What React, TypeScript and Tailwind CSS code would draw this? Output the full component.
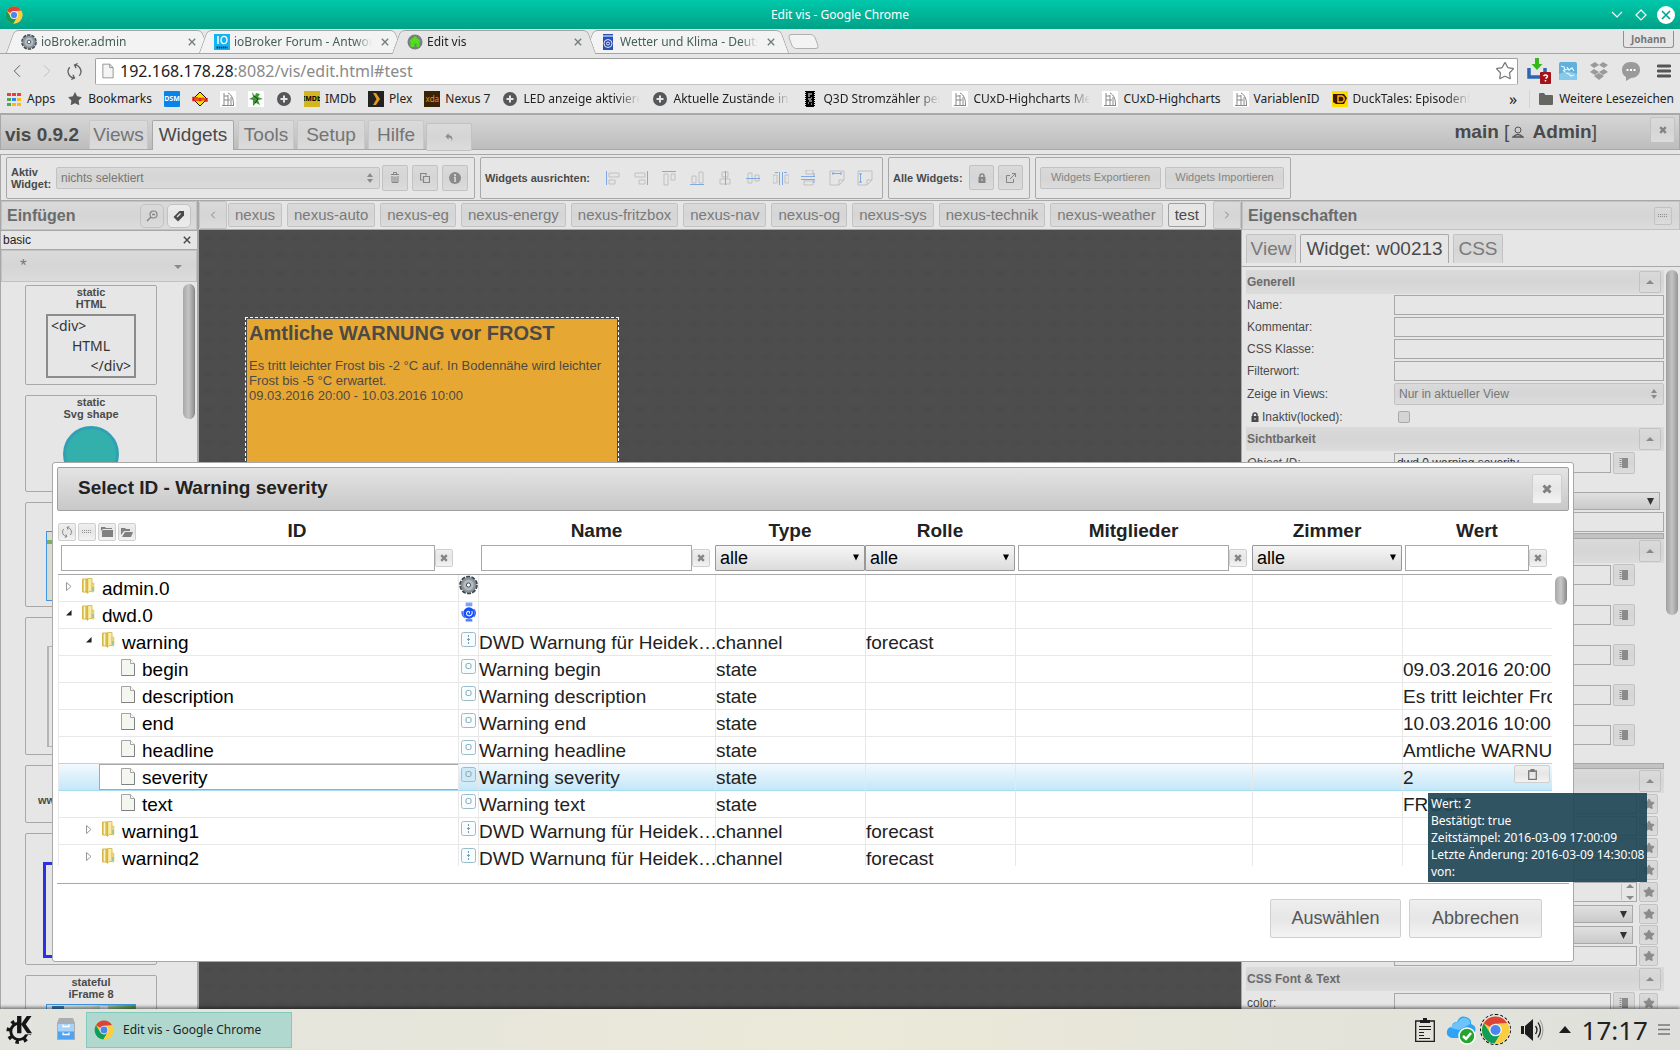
import React from "react";
import { ChevronLeft, ChevronRight, Star } from "lucide-react";

const GRAD = "bg-linear-to-b from-[#dadada] via-[#d5d5d5] to-[#dcdcdc]";
const FADE = "[mask-image:linear-gradient(to_right,black_80%,transparent)]";
const NOTO = "font-['Noto_Sans',sans-serif]";

/* ---------- icons ---------- */

function ChromeIcon({ className }: { className: string }) {
  return (
    <svg viewBox="0 0 32 32" className={className} aria-hidden="true">
      <circle cx="16" cy="16" r="15" fill="#fbc93d" />
      <path d="M16 16 3 8.500A15 15 0 0 1 29 8.500L16 9Z" fill="#db4437" />
      <path d="M3 8.500A15 15 0 0 0 15 31L22 19.500 16 16 10 19Z" fill="#0f9d58" />
      <path d="M29 8.500A15 15 0 0 1 15 31L22 19.500 20 9Z" fill="#fccd40" />
      <circle cx="16" cy="16" r="7" fill="#f1f1f1" />
      <circle cx="16" cy="16" r="5.500" fill="#4a86ee" />
    </svg>
  );
}

function GearIcon({ className }: { className: string }) {
  return (
    <svg viewBox="0 0 20 20" className={className} aria-hidden="true">
      <circle cx="10" cy="10" r="8.300" fill="none" stroke="#39444c" strokeWidth="3" strokeDasharray="4 1.220" />
      <circle cx="10" cy="10" r="7.800" fill="#8d979e" stroke="#7a858c" />
      <circle cx="10" cy="10" r="5.500" fill="#b4bcc2" />
      <circle cx="10" cy="10" r="2.200" fill="#fff" stroke="#39444c" />
    </svg>
  );
}

function DwdIcon({ className }: { className: string }) {
  return (
    <svg viewBox="0 0 20 20" className={className} aria-hidden="true">
      <path d="M7 0h7v4H7z" fill="#7ea2ff" />
      <path d="M3.500 9a7 6.500 0 0 0 3 7M15.500 7a7 6.500 0 0 1 0 8" fill="none" stroke="#3a6cf5" strokeWidth="1.500" />
      <circle cx="10.500" cy="11" r="6" fill="#1450f5" />
      <path d="M10.500 11.500c1.500-1 0-3-1.500-2s-1.500 4 1 4.500 5-2 3.500-5" fill="none" stroke="#fff" strokeWidth="1.100" />
      <path d="M7 17.500h7V20H7z" fill="#4b7cff" />
    </svg>
  );
}

function TabFavicon({ kind }: { kind: string }) {
  if (kind === "gear") return <GearIcon className="size-4" />;
  if (kind === "io")
    return (
      <svg viewBox="0 0 16 16" className="size-4" aria-hidden="true">
        <path d="M0 0h16v16H0z" fill="#12b4f4" />
        <path d="M4 2v8" stroke="#fff" strokeWidth="1.500" />
        <ellipse cx="10" cy="6" rx="3" ry="3.700" fill="none" stroke="#fff" strokeWidth="1.300" />
        <path d="M2.500 13.500h11" stroke="#0b3a78" strokeWidth="2" strokeDasharray="1.500 .6" />
      </svg>
    );
  if (kind === "home")
    return (
      <svg viewBox="0 0 16 16" className="size-4" aria-hidden="true">
        <circle cx="8" cy="8" r="7.500" fill="#7c7c80" />
        <path d="M8 2 14 7.500h-1.500V13h-3V9.500h-2V13h-4V7.500H2Z" fill="#4fe01c" />
      </svg>
    );
  return (
    <svg viewBox="0 0 16 16" className="size-4" aria-hidden="true">
      <path d="M3 0h10v16H3z" fill="#2a50b5" />
      <path d="M3 1h10v2H3z" fill="#8ba6e6" />
      <circle cx="8" cy="9.500" r="4" fill="none" stroke="#dfe7ff" />
      <circle cx="8" cy="9.500" r="1.500" fill="none" stroke="#dfe7ff" />
    </svg>
  );
}

function CloseX({ className }: { className: string }) {
  return (
    <svg viewBox="0 0 10 10" className={className} aria-hidden="true">
      <path d="m1 1 8 8M9 1 1 9" stroke="currentColor" strokeWidth="1.700" fill="none" />
    </svg>
  );
}

function UiClose({ className = "size-2" }: { className?: string }) {
  return (
    <svg viewBox="0 0 10 10" className={className} aria-hidden="true">
      <path d="m1.500 1.500 7 7M8.500 1.500l-7 7" stroke="currentColor" strokeWidth="3" fill="none" />
    </svg>
  );
}

/* Two arcs chasing each other, each ending in an arrow head. */
function ReloadIcon({ className }: { className: string }) {
  return (
    <svg viewBox="0 0 16 16" className={className} fill="none" stroke="currentColor" strokeWidth="1.200" aria-hidden="true">
      <path d="M8 2A6 6 0 0 1 12.500 12M8 14A6 6 0 0 1 3.500 4" />
      <path d="M11 .5 8 2l1.500 3M5 15.500 8 14l-1.500-3" />
    </svg>
  );
}

function UpDown() {
  return (
    <svg viewBox="0 0 8 10" className="h-2.5 w-2 fill-[#8a8a8a]" aria-hidden="true">
      <path d="M4 0 7 4H1ZM4 10 1 6h6Z" />
    </svg>
  );
}

function Triangle({ up, className = "" }: { up?: boolean; className?: string }) {
  return (
    <svg viewBox="0 0 8 4" className={`h-1 w-2 fill-[#8a8a8a] ${className}`} aria-hidden="true">
      <path d={up ? "M4 0 8 4H0Z" : "M0 0h8L4 4Z"} />
    </svg>
  );
}

function DotsIcon() {
  return (
    <svg viewBox="0 0 12 4" className="h-1 w-3 fill-[#8e8e8e]" aria-hidden="true">
      <path d="M1 0h1v1H1zM3 0h1v1H3zM5 0h1v1H5zM7 0h1v1H7zM9 0h1v1H9zM1 2h1v1H1zM3 2h1v1H3zM5 2h1v1H5zM7 2h1v1H7zM9 2h1v1H9z" />
    </svg>
  );
}

function NoteIcon() {
  return (
    <svg viewBox="0 0 10 10" className="size-2.5" aria-hidden="true">
      <path d="M3 0h6v10H3z" fill="#8b8b8b" />
      <path d="M1.500 0v10" stroke="#8b8b8b" strokeWidth="2" strokeDasharray="1 1" />
    </svg>
  );
}

function LockIcon({ className }: { className: string }) {
  return (
    <svg viewBox="0 0 8 10" className={className} aria-hidden="true">
      <path d="M2 4V3a2 2 0 0 1 4 0v1" fill="none" stroke="currentColor" strokeWidth="1.500" />
      <path d="M.5 4h7v6h-7z" fill="currentColor" />
      <path d="M3.500 6h1v2h-1z" fill="#ddd" />
    </svg>
  );
}

function BookmarkIcon({ kind }: { kind: string }) {
  const c = "size-4 shrink-0";
  switch (kind) {
    case "apps":
      return (
        <svg viewBox="0 0 16 16" className={c} aria-hidden="true">
          <path d="M1 2h4v3H1zM6 2h4v3H6zM11 2h4v3h-4z" fill="#e8403a" />
          <path d="M1 7h4v3H1zM1 12h4v3H1z" fill="#4aa84f" />
          <path d="M6 7h4v3H6z" fill="#2f86f0" />
          <path d="M11 7h4v3h-4zM6 12h4v3H6zM11 12h4v3h-4z" fill="#fbb913" />
        </svg>
      );
    case "star":
      return <Star className="size-4 shrink-0 fill-[#5a5a5a] stroke-none" aria-hidden="true" />;
    case "dsm":
      return (
        <span className="flex h-4 w-4 shrink-0 items-center justify-center rounded-[1px] bg-[#0684e8] text-[7px] leading-none font-bold text-white">
          DSM
        </span>
      );
    case "diamond":
      return (
        <svg viewBox="0 0 16 16" className={c} aria-hidden="true">
          <path d="m8 1 7 7-7 7-7-7Z" fill="#fde000" stroke="#111" />
          <path d="M1 6.500h2v3H1zM5 6v4M7 7.500h2v2H7zM11 6.500v3M13 7v3h2V7" fill="none" stroke="#e01818" strokeWidth="1.400" />
        </svg>
      );
    case "chart":
      return (
        <svg viewBox="0 0 16 16" className={c} aria-hidden="true">
          <path d="M0 0h16v16H0z" fill="#fff" />
          <path d="M4 2v13M2 14.500h12M4 5h4M8 4v11M4 9h6M8 2c4 2 5.500 6 5.500 12M11 6v8" stroke="#888" fill="none" />
        </svg>
      );
    case "frog":
      return (
        <svg viewBox="0 0 16 16" className={c} aria-hidden="true">
          <path d="M0 0h16v16H0z" fill="#fff" />
          <path d="m4 1 3 4 1-3 4 1-2 3 5 2-5 1 2 5-4-2-3 3V9L1 8l4-2Z" fill="#3f9a35" />
          <path d="m6 5 4 3-3 4" stroke="#17400f" fill="none" />
        </svg>
      );
    case "plus":
      return (
        <svg viewBox="0 0 16 16" className={c} aria-hidden="true">
          <circle cx="8" cy="8" r="7" fill="#55575a" />
          <path d="M8 4.500v7M4.500 8h7" stroke="#e6e6e6" strokeWidth="2" />
        </svg>
      );
    case "imdb":
      return (
        <span className="flex h-4 w-4 shrink-0 items-center justify-center overflow-hidden bg-[#d3b61f] text-[7px] leading-none font-bold text-black">
          IMDb
        </span>
      );
    case "plex":
      return (
        <svg viewBox="0 0 16 16" className={c} aria-hidden="true">
          <path d="M0 0h16v16H0z" fill="#222" />
          <path d="M5 2h3l4 6-4 6H5l3.500-6Z" fill="#e59a1c" />
        </svg>
      );
    case "xda":
      return (
        <span className="flex h-4 w-4 shrink-0 items-center justify-center bg-[#3a2205] text-[8px] leading-none text-[#f38a1d]">
          xda
        </span>
      );
    case "cpu":
      return (
        <svg viewBox="0 0 16 16" className={c} aria-hidden="true">
          <path d="M4 0h8v16H4z" fill="#000" />
          <path d="M3.500 0v16M12.500 0v16" stroke="#000" strokeDasharray="1 1" />
          <path d="M6 3h4M6 5h2M9 7h1M6 8h3M7 10h3M6 12h1M9 13h1" stroke="#fff" />
        </svg>
      );
    case "duck":
      return (
        <svg viewBox="0 0 16 16" className={c} aria-hidden="true">
          <rect width="16" height="16" rx="1" fill="#ffdc00" />
          <path d="M1 3h11l3 4-3 6H4L1 11Z" fill="#3d1500" />
          <path d="M6 5h4c3 1 3 5 0 6H6Z" fill="none" stroke="#ffb400" strokeWidth="1.500" />
        </svg>
      );
    default:
      return (
        <svg viewBox="0 0 16 16" className={c} aria-hidden="true">
          <path d="M1 3q0-1 1-1h4l1.500 2H14q1 0 1 1v8q0 1-1 1H2q-1 0-1-1Z" fill="#666660" />
        </svg>
      );
  }
}

/* The ten alignment commands: grey boxes with a blue guide. */
function AlignIcon({ index }: { index: number }) {
  const grey = [
    "M4 3h10v4H4zM4 10h6v4H4z",
    "M2 3h10v4H2zM6 10h6v4H6z",
    "M3 4h4v11H3zM10 4h4v6h-4z",
    "M3 6h4v7H3zM10 2h4v11h-4z",
    "M5 2h6v5H5zM3 9h10v5H3z",
    "M3 3h4v10H3zM10 5h4v6h-4z",
    "M0 5h4v8H0zM12 5h4v8h-4z",
    "M5 0h7v4H5zM3 11h9v4H3z",
    "M1 1h14v9l-5 5H1zM10 15v-5h5",
    "M1 1h14v9l-5 5H1zM10 15v-5h5",
  ];
  const blue = [
    "M1.500 1v14",
    "M14.500 1v14",
    "M1 1.500h14",
    "M1 14.500h14",
    "M8.500 1v14",
    "M1 8.500h14",
    "M6.500 2v13M9.500 2v13M2 2.500h3M11 2.500h3",
    "M0 6.500h14M0 9.500h14M13 3v3M13 10v3",
    "M3 3.500h9M4 2v3M12 2v3",
    "M3.500 3v10M2 4h3M2 12h3",
  ];
  return (
    <svg viewBox="0 0 16 16" className="size-4 fill-none" aria-hidden="true">
      <path d={grey[index]} stroke="#c0c0c0" />
      <path d={blue[index]} stroke="#7fa9e4" />
    </svg>
  );
}

function FolderIcon() {
  return (
    <svg viewBox="0 0 14 16" className="h-4 w-3.5" aria-hidden="true">
      <path d="M1.500 1h5v13h-5z" fill="#e8cf68" stroke="#d6b64a" />
      <path d="M6.500.5H11v13H8l-1.500 2Z" fill="#f3e391" stroke="#dcc25c" />
      <path d="M3.500 1.500v12M9 1v12" stroke="#fbf4c4" />
      <path d="M6 1v14" stroke="#cda93a" />
      <path d="M11 5h2v9h-2z" fill="#efd978" stroke="#d9bf5c" strokeWidth=".5" />
      <path d="M12 9v4" stroke="#56b4dd" />
    </svg>
  );
}

function PageIcon() {
  return (
    <svg viewBox="0 0 14 17" className="h-[17px] w-3.5" aria-hidden="true">
      <path d="M.5.5h9l4 4v12H.5Z" fill="#f4f6f0" stroke="#a4a4a4" />
      <path d="M9.500.5v4h4" fill="#fff" stroke="#a4a4a4" />
      <path d="M.5 16.500h13V5" fill="none" stroke="#808080" />
    </svg>
  );
}

function ObjIcon({ kind }: { kind: string }) {
  if (kind === "gear") return <GearIcon className="size-5" />;
  if (kind === "dwd") return <DwdIcon className="size-5" />;
  return (
    <svg viewBox="0 0 15 15" className="mt-[3px] size-[15px]" aria-hidden="true">
      <rect x=".5" y=".5" width="14" height="14" rx="2" fill={kind === "hit" ? "#cfe8f4" : "#f8fcfd"} stroke="#9bbccb" />
      {kind === "channel" ? (
        <path d="M7.500 3v2M7.500 6v3M7.500 10v2M6 7.500h3" stroke="#6d9db3" />
      ) : (
        <rect x="5" y="4.500" width="5" height="5" rx="1.500" fill="none" stroke="#7fa9bc" />
      )}
    </svg>
  );
}

/* ---------- shared controls ---------- */

function UiButton({ label, className, children }: { label?: string; className: string; children: React.ReactNode }) {
  return (
    <button
      type="button"
      aria-label={label}
      className={`flex shrink-0 items-center justify-center rounded-[2px] border border-[#c2c2c2] text-[#858585] ${GRAD} ${className}`}
    >
      {children}
    </button>
  );
}

function LightButton({ label, className, children }: { label?: string; className: string; children: React.ReactNode }) {
  return (
    <button
      type="button"
      aria-label={label}
      className={`flex shrink-0 items-center justify-center rounded-[2px] border border-[#cfcfcf] bg-linear-to-b from-[#efefef] via-[#e6e6e6] to-[#f3f3f3] ${className}`}
    >
      {children}
    </button>
  );
}

function StarButton() {
  return (
    <UiButton label="Mehrfach" className="h-5 w-[19px]">
      <Star className="size-3 fill-[#8b8b8b] stroke-[#8b8b8b]" />
    </UiButton>
  );
}

/* ---------- browser chrome ---------- */

function TitleBar() {
  return (
    <header className={`grid h-[29px] shrink-0 grid-cols-[1fr_auto_1fr] items-center bg-linear-to-b from-[#00c8aa] to-[#00a287] px-[5px] text-white ${NOTO}`}>
      <ChromeIcon className="size-[18px]" />
      <h1 className="text-[12px]">Edit vis - Google Chrome</h1>
      <div className="flex items-center justify-end gap-3">
        <button type="button" aria-label="Minimieren">
          <svg viewBox="0 0 12 12" className="size-3"><path d="m1 3 5 5 5-5" fill="none" stroke="#fff" strokeWidth="1.200" /></svg>
        </button>
        <button type="button" aria-label="Maximieren" className="-mr-[2px]">
          <svg viewBox="0 0 12 12" className="size-3"><path d="m6 1 5 5-5 5-5-5Z" fill="none" stroke="#fff" strokeWidth="1.200" /></svg>
        </button>
        <button type="button" aria-label="Schließen" className="flex size-[18px] items-center justify-center rounded-full bg-white text-[#00a890]">
          <CloseX className="size-2.5" />
        </button>
      </div>
    </header>
  );
}

const TABS = [
  { title: "ioBroker.admin", icon: "gear" },
  { title: "ioBroker Forum - Antworten", icon: "io" },
  { title: "Edit vis", icon: "home", active: true },
  { title: "Wetter und Klima - Deutscher", icon: "dwd" },
];

function BrowserTabs() {
  return (
    <div className={`flex h-[25px] shrink-0 border-b border-[#a5a5a5] bg-[#e6e6e6] pr-[6px] pl-[10px] text-[12px] ${NOTO}`}>
      {TABS.map((t) => {
        const bg = t.active ? "before:bg-[#e6e6e6] after:bg-[#e6e6e6] before:h-6 after:h-6" : "before:bg-[#f3f3f3] after:bg-[#f3f3f3] before:h-[23px] after:h-[23px]";
        return (
          <div
            key={t.title}
            className={`relative mt-px flex h-6 w-[193px] items-center pl-[11px] before:absolute before:top-0 before:left-0 before:w-3/5 before:-skew-x-20 before:rounded-tl-[5px] before:border-t before:border-l before:border-[#a5a5a5] after:absolute after:top-0 after:right-[-3px] after:w-3/5 after:skew-x-20 after:rounded-tr-[5px] after:border-t after:border-r after:border-[#a5a5a5] ${bg} ${t.active ? "z-10 text-[#222]" : "text-[#46605a]"}`}
          >
            <span className="z-10 flex"><TabFavicon kind={t.icon} /></span>
            <span className="z-10 ml-1 w-[138px] overflow-hidden whitespace-nowrap [mask-image:linear-gradient(to_right,black_88%,transparent)]">{t.title}</span>
            <button type="button" aria-label="Tab schließen" className="z-10 ml-[9px] text-[#6f7f7b]"><CloseX className="size-2" /></button>
          </div>
        );
      })}
      <button type="button" aria-label="Neuer Tab" className="mt-[5px] ml-2 h-[15px] w-[27px] skew-x-20 rounded-[4px] border border-[#b0b0b0] bg-[#f3f3f3]" />
      <button type="button" className="mt-[2px] ml-auto h-[17px] rounded-b-[3px] border border-t-0 border-[#909090] px-[7px] text-[10px] leading-[16px] font-bold text-[#777]">Johann</button>
    </div>
  );
}

function AddressBar() {
  return (
    <nav className={`flex h-8 shrink-0 items-center bg-[#e6e6e6] pt-[2px] pr-[9px] pl-[6px] ${NOTO}`}>
      <button type="button" aria-label="Zurück"><ChevronLeft className="size-[22px] stroke-[#555] stroke-1" /></button>
      <button type="button" aria-label="Vor" className="ml-2"><ChevronRight className="size-[22px] stroke-[#bbb] stroke-1" /></button>
      <button type="button" aria-label="Neu laden" className="ml-2 text-[#606060]"><ReloadIcon className="size-[17px]" /></button>
      <div className="ml-3 flex h-[27px] flex-1 items-center rounded-[2px] border border-[#a0a0a0] border-b-[#c4c4c4] bg-white pr-[2px] pl-[6px] text-[16px] text-[#8a8a8a]">
        <svg viewBox="0 0 14 17" className="mr-[6px] h-4 w-3" aria-hidden="true">
          <path d="M1 .5h8l4 4v12H1Z" fill="#f4f4f4" stroke="#888" /><path d="M9 .5v4h4" fill="none" stroke="#888" />
        </svg>
        <span className="text-[#222]">192.168.178.28</span>:8082/vis/edit.html#test
        <button type="button" aria-label="Lesezeichen setzen" className="ml-auto"><Star className="size-5 stroke-[#777] stroke-[1.5]" /></button>
      </div>
      <div className="ml-[9px] flex items-center gap-3">
        <svg viewBox="0 0 24 26" className="-mr-1 h-[26px] w-6" aria-hidden="true">
          <path d="M2 10v9h16V10" fill="none" stroke="#2b66b5" strokeWidth="3.500" />
          <path d="M8 0h4v6h3.500L10 12 4.500 6H8Z" fill="#35b81a" />
          <rect x="13" y="14" width="11" height="12" rx="1" fill="#a31216" />
          <path d="M16.500 18q2-2 4 0 0 1.500-2 2.500m0 1.500v1.500" stroke="#fff" strokeWidth="1.500" fill="none" />
        </svg>
        <svg viewBox="0 0 18 18" className="size-[18px]" aria-hidden="true">
          <rect width="18" height="18" rx="2" fill="#5fb0dc" />
          <path d="M0 12q9-5 18 0v6H0Z" fill="#86c9e8" />
          <path d="m2 4 3 1 1 3 3-1M8 5l2 3 3-2 2 3M7 11l3 1 2 2 3-1M4 8l2 2" fill="none" stroke="#e4f5fd" strokeWidth="1.300" />
        </svg>
        <svg viewBox="0 0 20 20" className="size-5 fill-[#9a9a9a]" aria-hidden="true">
          <path d="m6 1 4 3-5 3-4-3ZM14 1l5 3-4 3-5-3ZM5 8l5 3-4 3-5-3ZM15 8l4 3-5 3-4-3ZM5 15l5-3 5 3-5 4Z" />
        </svg>
        <svg viewBox="0 0 20 20" className="size-5" aria-hidden="true">
          <path d="M10 1c6 0 9 3.500 9 8s-4 8-9 8l-5 3v-4C2 14.500 1 12 1 9c0-4.500 3-8 9-8Z" fill="#9a9a9a" />
          <path d="M5.500 8h2v2h-2zM9 8h2v2H9zM12.500 8h2v2h-2z" fill="#fff" />
        </svg>
        <button type="button" aria-label="Menü" className="ml-1">
          <svg viewBox="0 0 14 14" className="size-3.5"><path d="M1 2h12M1 7h12M1 12h12" stroke="#555" strokeWidth="2.800" strokeLinecap="round" /></svg>
        </button>
      </div>
    </nav>
  );
}

const BOOKMARKS: { icon: string; text?: string; fade?: string }[] = [
  { icon: "apps", text: "Apps" },
  { icon: "star", text: "Bookmarks" },
  { icon: "dsm" },
  { icon: "diamond" },
  { icon: "chart" },
  { icon: "frog" },
  { icon: "plus" },
  { icon: "imdb", text: "IMDb" },
  { icon: "plex", text: "Plex" },
  { icon: "xda", text: "Nexus 7" },
  { icon: "plus", text: "LED anzeige aktivieren", fade: "w-[117px]" },
  { icon: "plus", text: "Aktuelle Zustände in H", fade: "w-[117px]" },
  { icon: "cpu", text: "Q3D Stromzähler per", fade: "w-[117px]" },
  { icon: "chart", text: "CUxD-Highcharts Mehr", fade: "w-[117px]" },
  { icon: "chart", text: "CUxD-Highcharts" },
  { icon: "chart", text: "VariablenID" },
  { icon: "duck", text: "DuckTales: Episodenf", fade: "w-[117px]" },
];

function BookmarksBar() {
  return (
    <nav className={`flex h-[29px] shrink-0 items-center gap-3 overflow-hidden border-b-2 border-[#a8a8a8] bg-[#e6e6e6] px-[6px] pb-[2px] text-[12px] whitespace-nowrap text-[#222] ${NOTO}`}>
      {BOOKMARKS.map((b, i) => (
        <a key={i} href="#bookmark" aria-label={b.text ?? b.icon} className="flex items-center gap-[5px]">
          <BookmarkIcon kind={b.icon} />
          {b.text && <span className={b.fade ? `overflow-hidden ${b.fade} ${FADE}` : ""}>{b.text}</span>}
        </a>
      ))}
      <span className="mr-0 ml-auto text-[16px] leading-none">»</span>
      <a href="#more" className="flex items-center gap-[5px] border-l border-[#d4d4d4] pl-2">
        <BookmarkIcon kind="folder" />
        Weitere Lesezeichen
      </a>
    </nav>
  );
}

/* ---------- vis header ---------- */

function MenuBar() {
  const tab = `rounded-t-[2px] border border-b-0 border-[#c8c8c8] h-[29px] text-[19px] text-[#747474] ${GRAD}`;
  return (
    <div className="flex h-[35px] shrink-0 items-end border border-t-0 border-[#a8a8a8] bg-linear-to-b from-[#d6d6d6] to-[#bdbdbd] pr-1 pl-1">
      <strong className="w-[84px] text-[19px] text-[#4a4a4a]">vis 0.9.2</strong>
      <button type="button" className={`mr-[4px] w-[59px] ${tab}`}>Views</button>
      <button type="button" className="z-10 mr-[4px] -mb-px h-[30px] w-[82px] rounded-t-[2px] border border-b-0 border-[#a8a8a8] bg-[#e6e6e6] text-[19px] text-[#4a4a4a]">Widgets</button>
      <button type="button" className={`mr-[3px] w-[56px] ${tab}`}>Tools</button>
      <button type="button" className={`mr-[3px] w-[68px] ${tab}`}>Setup</button>
      <button type="button" className={`mr-[2px] w-[56px] ${tab}`}>Hilfe</button>
      <UiButton label="Rückgängig" className="-mb-[2px] h-[28px] w-[46px]">
        <svg viewBox="0 0 10 10" className="size-[9px]"><path d="M4 0v2.500c4 0 5 3 3.500 7 0-3-1-4.500-3.500-4.500v2.500L.5 4Z" fill="#8d8d8d" /></svg>
      </UiButton>
      <div className="mr-[53px] ml-auto flex items-center self-center text-[19px] font-bold text-[#4a4a4a]">
        main&nbsp;<span className="font-normal">[</span>
        <svg viewBox="0 0 12 12" className="mx-[3px] size-3" aria-hidden="true"><circle cx="6" cy="4" r="3" fill="none" stroke="#555" /><path d="M1 11q5-5 10 0Z" fill="none" stroke="#555" strokeWidth="1.300" /></svg>
        &nbsp;Admin<span className="font-normal">]</span>
      </div>
      <UiButton label="Editor schließen" className="mt-[2px] h-[26px] w-[25px] self-start"><UiClose /></UiButton>
    </div>
  );
}

function ToolBar() {
  const box = "flex h-[42px] items-center rounded-[2px] border border-[#a8a8a8]";
  const label = "text-[11px] leading-[12px] font-bold text-[#4a4a4a]";
  return (
    <div className="mt-1 flex h-[47px] shrink-0 items-center gap-[5px] border-y border-l border-[#a8a8a8] pl-[5px]">
      <div className={`${box} w-[469px] px-1`}>
        <label htmlFor="active-widget" className={`${label} w-[45px]`}>Aktiv Widget:</label>
        <div className="relative mr-[2px] flex-1">
          <select id="active-widget" className={`block h-[22px] w-full appearance-none rounded-[2px] border border-[#c2c2c2] pl-1 text-[12px] text-[#777] ${GRAD}`}><option>nichts selektiert</option></select>
          <span className="pointer-events-none absolute top-1.5 right-1.5"><UpDown /></span>
        </div>
        <div className="flex gap-1 pr-[2px]">
          <UiButton label="Löschen" className="size-[26px]">
            <svg viewBox="0 0 10 11" className="h-[11px] w-2.5"><path d="M1 2.500h8M3.500 2V.5h3V2M2 4v6.500h6V4M4 4.500V10M6 4.500V10" stroke="currentColor" fill="none" /></svg>
          </UiButton>
          <UiButton label="Kopieren" className="size-[26px]">
            <svg viewBox="0 0 10 10" className="size-2.5"><path d="M2.500 7H.5V.5H6v2M3.500 3.500h6v6h-6Z" stroke="currentColor" strokeWidth="1.200" fill="none" /></svg>
          </UiButton>
          <UiButton label="Info" className="size-[26px]">
            <svg viewBox="0 0 12 12" className="size-3"><circle cx="6" cy="6" r="6" fill="#8a8a8a" /><path d="M6 2v2M5 5.500h1V10" stroke="#e0e0e0" strokeWidth="1.600" /></svg>
          </UiButton>
        </div>
      </div>
      <div className={`${box} w-[403px] px-1`}>
        <span className={`${label} w-[120px]`}>Widgets ausrichten:</span>
        <div className="flex gap-3">
          {[0, 1, 2, 3, 4, 5, 6, 7, 8, 9].map((i) => (
            <button key={i} type="button" aria-label={`Ausrichten ${i + 1}`}><AlignIcon index={i} /></button>
          ))}
        </div>
      </div>
      <div className={`${box} w-[142px] px-1`}>
        <span className={`${label} w-[76px]`}>Alle Widgets:</span>
        <div className="flex gap-1">
          <UiButton label="Sperren" className="size-[25px]"><LockIcon className="h-2.5 w-2" /></UiButton>
          <UiButton label="Exportieren" className="size-[25px]">
            <svg viewBox="0 0 10 10" className="size-2.5"><path d="M4 2.500H.5v7h7V6M6 .5h3.500V4M9 1 4 6" stroke="currentColor" fill="none" /></svg>
          </UiButton>
        </div>
      </div>
      <div className={`${box} gap-1 pr-[6px] pl-1`}>
        <UiButton className="h-[22px] w-[121px] text-[11px]">Widgets Exportieren</UiButton>
        <UiButton className="h-[22px] w-[119px] text-[11px]">Widgets Importieren</UiButton>
      </div>
    </div>
  );
}

/* ---------- left palette ---------- */

function Preview({ kind }: { kind: string }) {
  switch (kind) {
    case "html":
      return (
        <div className={`mx-auto mt-[4px] flex h-[64px] w-[90px] flex-col border-2 border-[#8c8c8c] px-[3px] text-[14px] leading-[20px] font-normal text-[#333] ${NOTO}`}>
          <span className="text-left">&lt;div&gt;</span>
          <span className="text-center">HTML</span>
          <span className="text-right">&lt;/div&gt;</span>
        </div>
      );
    case "svg":
      return <div className="mx-auto mt-[6px] size-[56px] rounded-full border-[3px] border-[#31a0b4] bg-[#33b0ab]" />;
    case "frame":
      return <div className="mx-auto mt-[28px] h-[70px] w-[90px] border border-[#3f96e0] bg-[#d9ddd0]"><div className="mt-2 h-1 bg-[#79b356]" /></div>;
    case "card":
      return <div className="mx-auto mt-[28px] h-[101px] w-[88px] border border-l-2 border-[#b4b4b4]" />;
    case "www":
      return <div className="mt-[28px] pl-3 text-left">www</div>;
    case "border":
      return <div className="mx-auto mt-[28px] h-[96px] w-[96px] border-[3px] border-[#2f2fe6]" />;
    default:
      return (
        <div className="mx-auto mt-[4px] flex h-[64px] w-[90px] gap-1 border border-[#3f96e0] bg-linear-to-r from-[#dcebf2] via-[#cfd9d2] to-[#4f9a3a] p-px">
          <span className="ml-1 h-3 w-3 bg-[#3a7bb0]" /><span className="ml-8 h-3 w-2 bg-[#dce6f5]" />
        </div>
      );
  }
}

const PALETTE = [
  { kind: "html", name: ["static", "HTML"], h: "h-[100px]" },
  { kind: "svg", name: ["static", "Svg shape"], h: "h-[97px]" },
  { kind: "frame", name: [], h: "h-[105px]" },
  { kind: "card", name: [], h: "h-[138px]" },
  { kind: "www", name: [], h: "h-[58px]" },
  { kind: "border", name: [], h: "h-[132px]" },
  { kind: "image", name: ["stateful", "iFrame 8"], h: "h-[100px]" },
];

function Palette() {
  return (
    <aside className="flex w-[199px] shrink-0 flex-col overflow-hidden border-r-2 border-l border-[#a8a8a8]">
      <div className={`flex h-[29px] shrink-0 items-center gap-[3px] border border-[#c2c2c2] px-[5px] ${GRAD}`}>
        <h2 className="flex-1 text-[16px] font-bold text-[#6b6b6b]">Einfügen</h2>
        <UiButton label="Suche" className="size-[24px] rounded-[5px]">
          <svg viewBox="0 0 12 12" className="size-3"><circle cx="7.500" cy="4.500" r="3.500" fill="none" stroke="currentColor" strokeWidth="1.200" /><path d="M5 7 1 11M6 4.500h3" stroke="currentColor" strokeWidth="1.500" /></svg>
        </UiButton>
        <UiButton label="Filter" className="size-[24px] rounded-[5px] from-[#ececec] via-[#e6e6e6] to-[#ececec]">
          <svg viewBox="0 0 12 12" className="size-3"><path d="M6.500 1 11 1v4.500L5 11.500.5 7Z" fill="#4a4a4a" /><path d="m4 7 3.500-3.500" stroke="#e6e6e6" strokeWidth="1.300" /></svg>
        </UiButton>
      </div>
      <div className="flex h-5 shrink-0 items-center border-y border-[#a8a8a8] pr-[6px]">
        <input aria-label="Filter" defaultValue="basic" className="min-w-0 flex-1 bg-transparent pl-[2px] text-[12px] text-[#222] outline-none" />
        <button type="button" aria-label="Filter löschen" className="text-[#444]"><CloseX className="size-2" /></button>
      </div>
      <div className="relative shrink-0">
        <select aria-label="Widgetsatz" className={`block h-8 w-full appearance-none border border-[#c2c2c2] pl-[18px] text-[17px] text-[#777] ${GRAD}`}><option>*</option></select>
        <Triangle className="pointer-events-none absolute top-[15px] right-[15px]" />
      </div>
      <div className="flex min-h-0 flex-1 justify-between pt-[2px] pr-[2px] pl-6">
        <div className="flex w-[132px] flex-col gap-[10px] overflow-hidden pt-px text-center text-[11px] leading-[12px] font-bold text-[#4a4a4a]">
          {PALETTE.map((p) => (
            <div key={p.kind} className={`shrink-0 overflow-hidden rounded-[2px] border border-[#a8a8a8] ${p.h}`}>
              {p.name.map((n) => <div key={n}>{n}</div>)}
              <Preview kind={p.kind} />
            </div>
          ))}
        </div>
        <div className="h-[135px] w-3 rounded-full border-r border-[#888] bg-linear-to-r from-[#a8a8a8] via-[#c4c4c4] to-[#969696]" />
      </div>
    </aside>
  );
}

/* ---------- canvas ---------- */

const VIEWS = ["nexus", "nexus-auto", "nexus-eg", "nexus-energy", "nexus-fritzbox", "nexus-nav", "nexus-og", "nexus-sys", "nexus-technik", "nexus-weather", "test"];

function Canvas() {
  return (
    <main className="flex min-w-0 flex-1 flex-col">
      <div className="flex h-[29px] shrink-0 items-center justify-between border-b border-[#a8a8a8]">
        <UiButton label="Zurück" className="h-[28px] w-[28px]"><ChevronLeft className="size-3" /></UiButton>
        <div className="flex min-w-0 flex-1 gap-[5px] overflow-hidden pl-px">
          {VIEWS.map((v) => (
            <button
              key={v}
              type="button"
              className={`h-6 rounded-[2px] border px-[6px] text-[15px] leading-[22px] whitespace-nowrap ${v === "test" ? "border-[#a0a0a0] bg-[#e6e6e6] text-[#4a4a4a]" : `border-[#c2c2c2] text-[#7a7a7a] ${GRAD}`}`}
            >
              {v}
            </button>
          ))}
        </div>
        <UiButton label="Weiter" className="h-[28px] w-[28px]"><ChevronRight className="size-3" /></UiButton>
      </div>
      <div className="min-h-0 flex-1 overflow-hidden bg-[#4d4d4d] bg-[radial-gradient(ellipse_8px_4px,#4a4a4a_0%,#4d4d4d_100%)] bg-size-[18px_17px] pt-[87px] pl-[46px]">
        <div className="h-[270px] w-[374px] border border-dashed border-white p-px">
          <section className="h-full bg-[#e6a833] px-[2px] text-[13px] leading-[15px] text-[#4d4a45]">
            <h2 className="pt-[2px] text-[20px] leading-[24px] font-bold">Amtliche WARNUNG vor FROST</h2>
            <p className="pt-[13px]">Es tritt leichter Frost bis -2 °C auf. In Bodennähe wird leichter Frost bis -5 °C erwartet.</p>
            <p>09.03.2016 20:00 - 10.03.2016 10:00</p>
          </section>
        </div>
      </div>
    </main>
  );
}

/* ---------- property panel ---------- */

function Section({ title, bar }: { title: string; bar?: boolean }) {
  return (
    <>
      {bar && <div className="h-[6px] border border-[#a8a8a8] bg-[#c2c2c2]" />}
      <div className={`flex h-6 items-center pr-[3px] pl-px ${GRAD}`}>
        <h3 className="flex-1 text-[12px] font-bold text-[#6b6b6b]">{title}</h3>
        <UiButton label={`${title} einklappen`} className="size-[22px]"><Triangle up /></UiButton>
      </div>
    </>
  );
}

type Kind = "text" | "note" | "star" | "spin" | "select" | "select-star" | "both";

function Field({ label, kind, value = "", h = "h-[22px]", italic }: { label: string; kind: Kind; value?: string; h?: string; italic?: boolean }) {
  const id = React.useId();
  const field = "h-5 min-w-0 flex-1 border border-[#a8a8a8] bg-transparent px-[2px] text-[12px] text-[#333]";
  const isSelect = kind === "select" || kind === "select-star";
  const note = kind === "note" || kind === "both";
  const star = kind === "star" || kind === "spin" || kind === "select-star" || kind === "both";
  return (
    <div className={`flex ${h}`}>
      <label htmlFor={id} className={`w-[148px] shrink-0 pl-px text-[12px] leading-[22px] text-[#4a4a4a] ${italic ? "italic" : ""}`}>{label}</label>
      <div className="flex h-[22px] min-w-0 flex-1 items-center">
        {isSelect ? (
          <div className={`relative flex-1 ${kind === "select" ? "mr-1" : "mr-[4px]"}`}>
            <select id={id} className="block h-[18px] w-full appearance-none border border-[#a8a8a8] bg-linear-to-b from-[#e0e0e0] to-[#cacaca]"><option> </option></select>
            <svg viewBox="0 0 8 8" className="pointer-events-none absolute top-[6px] right-[6px] size-[7px] fill-[#333]" aria-hidden="true"><path d="M0 0h8L4 8Z" /></svg>
          </div>
        ) : (
          <input id={id} defaultValue={value} className={field} />
        )}
        {kind === "spin" && <span className="-ml-4 flex h-4 w-4 flex-col items-center justify-between border-l border-[#c4c4c4]"><Triangle up /><Triangle /></span>}
        {note && <UiButton label="Auswählen" className="ml-[2px] size-[22px]"><NoteIcon /></UiButton>}
        {star && <span className={`mr-[6px] ${kind === "both" ? "ml-1" : "ml-[2px]"}`}><StarButton /></span>}
        {kind === "note" && <span className="w-[29px] shrink-0" />}
      </div>
    </div>
  );
}

function Properties() {
  const tab = "h-[29px] rounded-t-[2px] border border-b-0 text-[19px]";
  return (
    <aside className="flex w-[439px] shrink-0 flex-col overflow-hidden border-l border-[#a8a8a8]">
      <div className={`flex h-[29px] shrink-0 items-center border border-[#c2c2c2] pr-[7px] pl-[5px] ${GRAD}`}>
        <h2 className="flex-1 text-[16px] font-bold text-[#6b6b6b]">Eigenschaften</h2>
        <UiButton label="Andocken" className="size-[18px]"><DotsIcon /></UiButton>
      </div>
      <div className="flex h-[37px] shrink-0 items-start gap-1 border-b border-[#a8a8a8] pt-1 pl-1">
        <button type="button" className={`w-[50px] border-[#c2c2c2] text-[#7a7a7a] ${GRAD} ${tab}`}>View</button>
        <button type="button" className={`w-[149px] border-[#a8a8a8] text-[#4a4a4a] ${tab}`}>Widget: w00213</button>
        <button type="button" className={`w-[50px] border-[#c2c2c2] text-[#7a7a7a] ${GRAD} ${tab}`}>CSS</button>
      </div>
      <div className="flex min-h-0 flex-1 overflow-hidden pt-[3px] pl-1">
        <div className="min-w-0 flex-1">
          <Section title="Generell" />
          <Field label="Name:" kind="text" />
          <Field label="Kommentar:" kind="text" />
          <Field label="CSS Klasse:" kind="text" />
          <Field label="Filterwort:" kind="text" />
          <div className="flex h-6 items-center">
            <label htmlFor="views" className="w-[148px] pl-px text-[12px] text-[#4a4a4a]">Zeige in Views:</label>
            <div className="relative flex-1">
              <select id="views" className={`block h-[22px] w-full appearance-none rounded-[2px] border border-[#c2c2c2] pl-1 text-[12px] text-[#777] ${GRAD}`}><option>Nur in aktueller View</option></select>
              <span className="pointer-events-none absolute top-1.5 right-1.5"><UpDown /></span>
            </div>
          </div>
          <div className="flex h-[21px] items-center">
            <label htmlFor="locked" className="flex w-[148px] items-center gap-[3px] pl-[5px] text-[12px] text-[#4a4a4a]"><LockIcon className="h-2.5 w-2" />Inaktiv(locked):</label>
            <input id="locked" type="checkbox" className="ml-1 size-3 appearance-none rounded-[2px] border border-[#a8a8a8] bg-[#d4d4d4]" />
          </div>
          <Section title="Sichtbarkeit" />
          <div className="pt-px" />
          <Field label="Object ID:" kind="note" value="dwd.0.warning.severity" h="h-[38px]" italic />
          <Field label="" kind="select" h="h-[21px]" />
          <Field label="" kind="text" h="h-[22px]" />
          <Section title="" bar />
          <div className="pt-px" />
          <Field label="" kind="note" h="h-10" />
          <Field label="" kind="note" h="h-10" />
          <Field label="" kind="note" h="h-10" />
          <Field label="" kind="note" h="h-10" />
          <Field label="" kind="note" h="h-[39px]" />
          <Section title="" bar />
          <Field label="" kind="star" />
          <Field label="" kind="star" />
          <Field label="" kind="star" />
          <Field label="" kind="star" />
          <Field label="" kind="spin" />
          <Field label="" kind="select-star" h="h-[21px]" />
          <Field label="" kind="select-star" h="h-[21px]" />
          <Field label="" kind="star" />
          <Section title="CSS Font &amp; Text" />
          <div className="pt-px" />
          <Field label="color:" kind="both" />
        </div>
        <div className="ml-[2px] h-[345px] w-[12px] shrink-0 rounded-full bg-linear-to-r from-[#a0a0a0] via-[#c4c4c4] to-[#959595]" />
        <div className="w-[2px] shrink-0" />
      </div>
    </aside>
  );
}

/* ---------- select-ID dialog ---------- */

type Row = { id: string; level: number; state?: "open" | "closed"; icon: string; name?: string; type?: string; role?: string; value?: string };

const CHANNEL = "DWD Warnung für Heidek…";
const ROWS: Row[] = [
  { id: "admin.0", level: 0, state: "closed", icon: "gear" },
  { id: "dwd.0", level: 0, state: "open", icon: "dwd" },
  { id: "warning", level: 1, state: "open", icon: "channel", name: CHANNEL, type: "channel", role: "forecast" },
  { id: "begin", level: 2, icon: "state", name: "Warning begin", type: "state", value: "09.03.2016 20:00" },
  { id: "description", level: 2, icon: "state", name: "Warning description", type: "state", value: "Es tritt leichter Frost bis" },
  { id: "end", level: 2, icon: "state", name: "Warning end", type: "state", value: "10.03.2016 10:00" },
  { id: "headline", level: 2, icon: "state", name: "Warning headline", type: "state", value: "Amtliche WARNUNG" },
  { id: "severity", level: 2, icon: "hit", name: "Warning severity", type: "state", value: "2" },
  { id: "text", level: 2, icon: "state", name: "Warning text", type: "state", value: "FROST" },
  { id: "warning1", level: 1, state: "closed", icon: "channel", name: CHANNEL, type: "channel", role: "forecast" },
  { id: "warning2", level: 1, state: "closed", icon: "channel", name: CHANNEL, type: "channel", role: "forecast" },
];
const INDENT = ["pl-0", "pl-5", "pl-10"];

function FilterText({ label }: { label: string }) {
  return (
    <div className="flex items-center pr-[5px] pl-[3px]">
      <input aria-label={label} className="h-[26px] min-w-0 flex-1 border border-[#a8a8a8] bg-white" />
      <LightButton label={`${label} löschen`} className="size-[18px] text-[#858585]"><UiClose /></LightButton>
    </div>
  );
}

function FilterSelect({ label }: { label: string }) {
  return (
    <div className="relative">
      <select aria-label={label} className="block h-[26px] w-full appearance-none rounded-[1px] border border-[#989898] bg-linear-to-b from-[#f6f6f6] to-[#dcdcdc] pl-1 text-[18px] leading-[22px] font-normal text-black"><option>alle</option></select>
      <svg viewBox="0 0 8 8" className="pointer-events-none absolute top-[9px] right-[6px] h-[7px] w-[6px]" aria-hidden="true"><path d="M0 0h8L4 8Z" /></svg>
    </div>
  );
}

function IdDialog() {
  const th = "p-0 align-top";
  const title = "h-[34px] pt-[9px] text-[19px] leading-[22px] font-bold";
  return (
    <section role="dialog" aria-label="Select ID" className="absolute top-[462px] right-[106px] left-[52px] z-20 rounded-[3px] border border-[#a8a8a8] bg-white p-1 text-[18px] text-[#222]">
      <header className="flex h-[44px] items-center justify-between rounded-[2px] border border-[#a0a0a0] bg-linear-to-b from-[#e4e4e4] to-[#c8c8c8] pr-[6px] pl-5">
        <h2 className="pb-[2px] text-[19px] font-bold">Select ID - Warning severity</h2>
        <LightButton label="Schließen" className="size-[30px] text-[#808080]"><UiClose className="size-2.5" /></LightButton>
      </header>
      <div className="flex h-[373px] border-b border-[#a8a8a8]">
        <div className="h-[355px] min-w-0 flex-1 overflow-hidden pl-px">
          <table className="w-full table-fixed border-separate border-spacing-0 text-left">
            <colgroup>
              <col /><col className="w-5" /><col className="w-[237px]" /><col className="w-[150px]" /><col className="w-[150px]" /><col className="w-[237px]" /><col className="w-[150px]" /><col className="w-[150px]" />
            </colgroup>
            <thead>
              <tr className="[&>th]:h-[64px] [&>th]:border-b [&>th]:border-[#a8a8a8]">
                <th className={th}>
                  <div className="relative text-center">
                    <div className="absolute top-3 left-0 flex gap-[2px] text-[#808080]">
                      <LightButton label="Aktualisieren" className="size-[18px]"><ReloadIcon className="size-3" /></LightButton>
                      <LightButton label="Liste" className="size-[18px]"><DotsIcon /></LightButton>
                      <LightButton label="Alle schließen" className="size-[18px]"><svg viewBox="0 0 12 10" className="h-2.5 w-3 fill-current"><path d="M0 0h4l1 1h6v1H2L0 4zM1 4l1-1h10v7H1z" /></svg></LightButton>
                      <LightButton label="Alle öffnen" className="size-[18px]"><svg viewBox="0 0 12 10" className="h-2.5 w-3 fill-current"><path d="M0 1h4l1 1h4v2H3L0 8zM4 5h8l-2 5H1z" /></svg></LightButton>
                    </div>
                    <div className={`${title} pl-[78px]`}>ID</div>
                  </div>
                  <FilterText label="ID Filter" />
                </th>
                <th className={th} />
                <th className={th}><div className={`${title} text-center`}>Name</div><FilterText label="Name Filter" /></th>
                <th className={th}><div className={`${title} text-center`}>Type</div><FilterSelect label="Type" /></th>
                <th className={th}><div className={`${title} text-center`}>Rolle</div><FilterSelect label="Rolle" /></th>
                <th className={th}><div className={`${title} text-center`}>Mitglieder</div><FilterText label="Mitglieder Filter" /></th>
                <th className={th}><div className={`${title} text-center`}>Zimmer</div><FilterSelect label="Zimmer" /></th>
                <th className={th}><div className={`${title} text-center`}>Wert</div><FilterText label="Wert Filter" /></th>
              </tr>
            </thead>
            <tbody>
              {ROWS.map((r) => {
                const hit = r.id === "severity";
                const td = `h-[27px] overflow-hidden border-b border-l p-0 leading-[28px] whitespace-nowrap border-l-[#e8e8e8] ${hit || r.id === "headline" ? "border-b-[#a5dcf0]" : "border-b-[#e8e8e8]"}`;
                return (
                  <tr key={r.id} className={`text-[19px] ${hit ? "bg-linear-to-b from-[#f2f9fe] to-[#c3e6f8]" : ""}`}>
                    <td className={td}>
                      <div className={`h-[26px] ${INDENT[r.level]}`}>
                        <div className={`flex h-[26px] items-start text-black ${hit ? "border border-r-0 border-[#a8a8a8] bg-white leading-[26px]" : ""}`}>
                          <span className={`flex h-[22px] items-center justify-center ${hit ? "w-[18px]" : "w-[19px]"}`}>
                            {r.state === "closed" && <svg viewBox="0 0 6 9" className="h-[9px] w-[6px]"><path d="M.5.500 5 4.500.5 8.500Z" fill="#fff" stroke="#999" /></svg>}
                            {r.state === "open" && <svg viewBox="0 0 7 7" className="size-[6px]"><path d="M6.500 0v6.500H0Z" fill="#222" /></svg>}
                          </span>
                          <span className="mr-1 flex h-[22px] w-5 items-center justify-center">{r.state ? <FolderIcon /> : <PageIcon />}</span>
                          <span className="h-[24px]">{r.id}</span>
                        </div>
                      </div>
                    </td>
                    <td className={td}><div className="flex h-[26px] items-start justify-center"><ObjIcon kind={r.icon} /></div></td>
                    <td className={td}><div className="h-[26px]">{r.name}</div></td>
                    <td className={td}><div className="h-[26px]">{r.type}</div></td>
                    <td className={td}><div className="h-[26px]">{r.role}</div></td>
                    <td className={td} />
                    <td className={td} />
                    <td className={td}>
                      <div className="flex h-[26px] items-start justify-between pr-[2px]">
                        {r.value}
                        {hit && (
                          <LightButton label="Wert kopieren" className="mt-px h-[18px] w-9 text-[#777]">
                            <svg viewBox="0 0 9 11" className="h-[11px] w-[9px]"><path d="M.7 2h7.600v8.300H.7Z" fill="none" stroke="currentColor" strokeWidth="1.300" /><path d="M2.500 0h4v3h-4z" fill="currentColor" /></svg>
                          </LightButton>
                        )}
                      </div>
                    </td>
                  </tr>
                );
              })}
            </tbody>
          </table>
        </div>
        <div className="mt-[65px] mr-[2px] ml-[3px] h-[29px] w-3 shrink-0 rounded-full bg-linear-to-r from-[#a8a8a8] via-[#c8c8c8] to-[#888]" />
      </div>
      <footer className="flex justify-end gap-2 pt-[15px] pr-[27px] pb-[19px]">
        <LightButton className="h-[39px] w-[131px] text-[#555]">Auswählen</LightButton>
        <LightButton className="h-[39px] w-[133px] text-[#555]">Abbrechen</LightButton>
      </footer>
    </section>
  );
}

function Tooltip() {
  return (
    <div role="tooltip" className={`absolute top-[793px] right-[33px] z-30 w-[219px] bg-[#214756]/93 px-[3px] py-[2px] text-[12px] leading-[17px] whitespace-nowrap text-white ${NOTO}`}>
      <div>Wert: 2</div>
      <div>Bestätigt: true</div>
      <div>Zeitstämpel: 2016-03-09 17:00:09</div>
      <div>Letzte Änderung: 2016-03-09 14:30:08</div>
      <div>von:</div>
    </div>
  );
}

/* ---------- desktop panel ---------- */

function TaskBar() {
  return (
    <footer className={`relative z-10 flex h-[41px] shrink-0 items-center bg-linear-to-r from-[#e3e3de] via-[#ebe9d8] to-[#dfe0dc] pr-[10px] pl-[5px] shadow-[0_-2px_3px_rgba(0,0,0,0.45)] ${NOTO}`}>
      <button type="button" aria-label="Startmenü">
        <svg viewBox="0 0 28 30" className="h-[29px] w-[28px]">
          <circle cx="14" cy="17" r="8.500" fill="none" stroke="#151515" strokeWidth="3" />
          <circle cx="14" cy="17" r="11" fill="none" stroke="#151515" strokeWidth="4" strokeDasharray="3.500 5.140" />
          <path d="M15 0h13v20H15Z" fill="#e5e5df" />
          <path d="M12 1h4.500v18H12ZM16.500 9 22 1h5l-6 8.500 6.500 9.500h-5l-6-9Z" fill="#151515" />
        </svg>
      </button>
      <button type="button" aria-label="Dateimanager" className="ml-6">
        <svg viewBox="0 0 18 23" className="h-[23px] w-[18px]">
          <path d="M2 0h14l2 5v17H0V5Z" fill="#a9aeb2" />
          <path d="M1 6h16v7H1z" fill="#a7d3fb" /><path d="M1 14h16v7H1z" fill="#4fa3f5" />
          <path d="M6 6.500v2h6v-2M6 14.500v2h6v-2" fill="none" stroke="#fff" strokeWidth="1.300" />
        </svg>
      </button>
      <button type="button" className="ml-[11px] flex h-[36px] w-[206px] items-center gap-[9px] border border-[#7fcbbd] bg-[#b1d8ce] pl-[7px] text-[12px] text-[#222]">
        <ChromeIcon className="size-5" />
        Edit vis - Google Chrome
      </button>
      <div className="ml-auto flex items-center">
        <svg viewBox="0 0 20 24" className="h-6 w-5" aria-label="Zwischenablage">
          <path d="M.7 3h18.600v20.300H.7Z" fill="none" stroke="#1c1c1c" strokeWidth="1.300" />
          <path d="M5 2h3V0h4v2h3v3H5zM4 8h12v1H4zM4 11h12v1H4zM4 14h5v1H4zM4 17h5v1H4zM4 20h11v1H4z" fill="#1c1c1c" />
        </svg>
        <svg viewBox="0 0 30 30" className="ml-[11px] size-[30px]" aria-label="Cloud">
          <path d="M6 23q-6-1-5-7 1-4 5-4 0-5 5-5 3-7 9-5 6 2 5 7 6 2 4 8-1 6-6 6Z" fill="#2ea3f5" />
          <path d="M5 13q1-5 7-6 3-5 8-4 5 2 4 6l-11 6Z" fill="#6cc4fb" />
          <circle cx="21" cy="21" r="8" fill="#25a52c" stroke="#fff" strokeWidth="1.500" />
          <path d="m17 21 3 3 5-6" fill="none" stroke="#fff" strokeWidth="2.500" />
        </svg>
        <span className="ml-1 flex size-[31px] items-center justify-center rounded-full border border-dashed border-black"><ChromeIcon className="size-[30px]" /></span>
        <svg viewBox="0 0 24 24" className="ml-[9px] size-6" aria-label="Lautstärke">
          <path d="M1 8h3v8H1zM5 8l8-7v22l-8-7Z" fill="#1c1c1c" />
          <path d="M15.500 8q3 4 0 8M18 4.500q5 7.500 0 15" fill="none" stroke="#1c1c1c" strokeWidth="1.300" /><path d="M20 2q6 10 0 20" fill="none" stroke="#999" />
        </svg>
        <svg viewBox="0 0 12 7" className="ml-[15px] h-[7px] w-3" aria-hidden="true"><path d="M6 0 12 7H0Z" fill="#1c1c1c" /></svg>
        <time className="mr-[10px] ml-[11px] text-[26px] leading-none text-[#222]">17:17</time>
        <svg viewBox="0 0 12 11" className="h-[11px] w-3" aria-hidden="true"><path d="M0 1h12M0 5.500h12M0 10h12" stroke="#777" strokeWidth="1.500" /></svg>
      </div>
    </footer>
  );
}

export default function App() {
  return (
    <div className="relative flex h-screen flex-col overflow-hidden bg-[#e6e6e6] font-['Liberation_Sans',Arial,sans-serif]">
      <TitleBar />
      <BrowserTabs />
      <AddressBar />
      <BookmarksBar />
      <MenuBar />
      <ToolBar />
      <div className="flex min-h-0 flex-1">
        <Palette />
        <Canvas />
        <Properties />
      </div>
      <TaskBar />
      <IdDialog />
      <Tooltip />
    </div>
  );
}
